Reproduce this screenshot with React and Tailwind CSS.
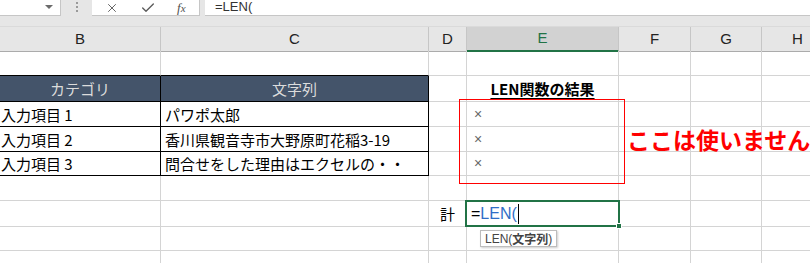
import React from "react";
import { X, Check } from "lucide-react";

const grid = "border-r border-b border-[#d4d4d4]";
const cols = "grid grid-cols-[161px_268px_38px_152px_72px_71px_72px]";

const FormulaBar = () => (
  <div className="flex h-[16px] bg-[#e6e6e6]">
    <div className="relative w-[61px] bg-white border-r border-b border-[#c6c6c6]">
      <div className="absolute right-[7px] top-[5px] w-0 h-0 border-l-[4px] border-r-[4px] border-t-[4px] border-l-transparent border-r-transparent border-t-[#6b6b6b]" />
    </div>
    <div className="w-[31px] flex flex-col items-center justify-center gap-[2px] pb-[2px]">
      <div className="w-[2px] h-[2px] bg-[#9a9a9a]" />
      <div className="w-[2px] h-[2px] bg-[#9a9a9a]" />
      <div className="w-[2px] h-[2px] bg-[#9a9a9a]" />
    </div>
    <div className="w-[108px] bg-white border-r border-b border-[#c6c6c6] flex items-center">
      <X size={14} strokeWidth={1.6} className="ml-[13px] text-[#5a5a5a]" />
      <Check size={16} strokeWidth={2} className="ml-[21px] text-[#5a5a5a]" />
      <span className="ml-[21px] italic text-[13px] leading-none text-[#505050] font-['Liberation_Serif',serif]">
        f<span className="text-[11px]">x</span>
      </span>
    </div>
    <div className="w-[5px]" />
    <div className="flex-1 bg-white border-b border-[#c6c6c6] flex items-center pl-[10px]">
      <span className="text-[13px] leading-none text-[#333] font-['Liberation_Sans',sans-serif] -mt-[2px]">
        =LEN(
      </span>
    </div>
  </div>
);

const HeaderRow = () => {
  const letters = ["B", "C", "D", "E", "F", "G", "H"];
  return (
    <div className={`${cols} h-[25px] border-t border-[#dadada]`}>
      {letters.map((l) =>
        l === "E" ? (
          <div
            key={l}
            className="flex items-center justify-center bg-[#d2d2d2] border-r border-[#c6c6c6] border-b-2 border-b-[#217346] text-[#217346] text-[15px] font-['Liberation_Sans',sans-serif]"
          >
            {l}
          </div>
        ) : (
          <div
            key={l}
            className="flex items-center justify-center bg-[#e6e6e6] border-r border-[#c6c6c6] border-b border-b-[#ababab] text-[#222] text-[15px] font-['Liberation_Sans',sans-serif]"
          >
            {l}
          </div>
        )
      )}
    </div>
  );
};

const Empty = ({ n }) =>
  Array.from({ length: n }).map((_, i) => <div key={i} className={grid} />);

const App = () => {
  const items = [
    ["入力項目 1", "パワポ太郎"],
    ["入力項目 2", "香川県観音寺市大野原町花稲3-19"],
    ["入力項目 3", "問合せをした理由はエクセルの・・"],
  ];
  const heights = ["h-[25px]", "h-[25px]", "h-[24px]"];

  return (
    <div className="relative w-[810px] h-[263px] overflow-hidden bg-white font-['Noto_Sans_CJK_JP',sans-serif] text-[15px] text-black">
      <FormulaBar />
      <div className="h-[10px] bg-[#e6e6e6]" />
      <HeaderRow />

      {/* row 1 */}
      <div className={`${cols} h-[25px]`}>
        <div className="border-r border-r-[#d4d4d4] border-b border-b-black" />
        <div className="border-r border-r-[#d4d4d4] border-b border-b-black" />
        <Empty n={5} />
      </div>

      {/* table header */}
      <div className={`${cols} h-[26px]`}>
        <div className="bg-[#44546a] border-r border-b border-black flex items-center justify-center text-[#dcdcdc] leading-none">
          カテゴリ
        </div>
        <div className="bg-[#44546a] border-r border-b border-black flex items-center justify-center text-[#dcdcdc] leading-none">
          文字列
        </div>
        <div className={grid} />
        <div className={`${grid} flex items-center justify-center font-bold underline underline-offset-[3px] leading-none`}>
          LEN関数の結果
        </div>
        <Empty n={3} />
      </div>

      {items.map(([a, b], i) => (
        <div key={a} className={`${cols} ${heights[i]}`}>
          <div className="border-r border-b border-black flex items-center pl-[1px] leading-none whitespace-nowrap">
            {a}
          </div>
          <div className="border-r border-b border-black flex items-center pl-[4px] leading-none whitespace-nowrap">
            {b}
          </div>
          <div className={grid} />
          <div className={`${grid} flex items-center pl-[7px] text-[14px] text-[#666] font-['Liberation_Sans',sans-serif]`}>
            ×
          </div>
          <Empty n={3} />
        </div>
      ))}

      {/* blank row */}
      <div className={`${cols} h-[25px]`}>
        <Empty n={7} />
      </div>

      {/* total row */}
      <div className={`${cols} h-[26px]`}>
        <div className={grid} />
        <div className={grid} />
        <div className={`${grid} flex items-center justify-center leading-none`}>計</div>
        <div className="border-2 border-[#217346] -ml-[2px] -mt-[1px] w-[155px] h-[27px] flex items-center pl-[4px] text-[16px] font-['Liberation_Sans',sans-serif] leading-none">
          <span className="text-black">=</span>
          <span className="text-[#2f6ec7]">LEN(</span>
          <span className="w-px h-[20px] bg-black ml-[1px]" />
        </div>
        <Empty n={3} />
      </div>

      <div className={`${cols} h-[24px]`}>
        <Empty n={7} />
      </div>
      <div className={`${cols} h-[20px]`}>
        <Empty n={7} />
      </div>

      {/* overlays */}
      <div className="absolute left-[459px] top-[99px] w-[166px] h-[85px] border border-[#ff0000]" />
      <div className="absolute left-[627px] top-[128px] whitespace-nowrap text-[23px] font-bold text-[#ff0000] leading-none">
        ここは使いません
      </div>
      <div className="absolute left-[616px] top-[223px] w-[6px] h-[6px] bg-[#217346] border border-white" />
      <div className="absolute left-[480px] top-[230px] h-[17px] px-[4px] flex items-center bg-white border border-[#bdbdbd] shadow-[1px_1px_2px_rgba(0,0,0,0.2)] text-[12px] text-[#444] leading-none whitespace-nowrap">
        <span className="font-['Liberation_Sans',sans-serif]">LEN(</span>
        <span className="font-bold">文字列</span>
        <span className="font-['Liberation_Sans',sans-serif]">)</span>
      </div>
    </div>
  );
};

export default App;
